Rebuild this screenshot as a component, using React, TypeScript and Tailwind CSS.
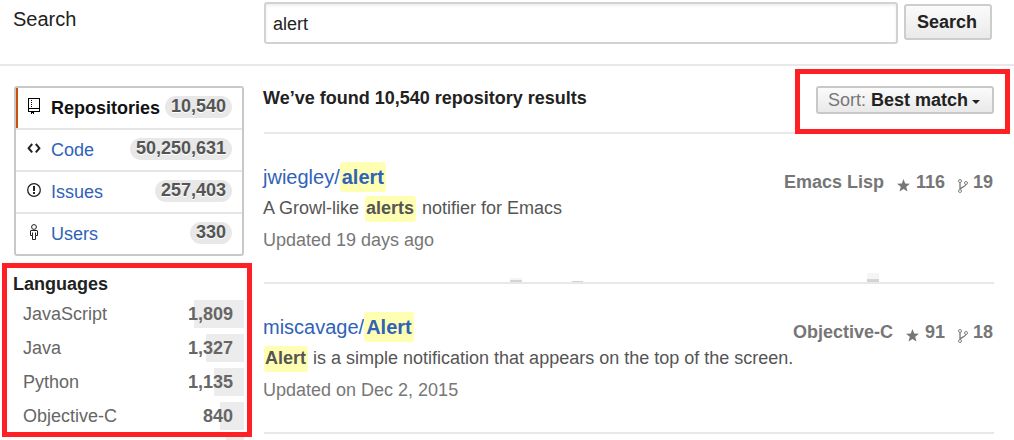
import React from "react";

const GLYPHS = {
  repo: (
    <svg className="h-4 w-3 text-black" viewBox="0 0 12 16" fill="currentColor" shapeRendering="crispEdges">
      <path fillRule="evenodd" d="M0 0h12v14H6v-1h5v-2H1v2h2v1H0zM1 1v9h10V1z" />
      <path d="M3 2h1v1H3zM3 4h1v1H3zM3 6h1v1H3zM3 8h1v1H3zM3 13h3v3H5v-1H4v1H3z" />
    </svg>
  ),
  code: (
    <svg className="h-4 w-3.5" viewBox="0 0 14 16" fill="none" stroke="currentColor" strokeWidth="2">
      <path d="M5.2 4L1.6 8.2l3.6 4.2M8.8 4l3.6 4.2-3.6 4.2" />
    </svg>
  ),
  issue: (
    <svg className="h-4 w-3.5" viewBox="0 0 14 16" fill="currentColor">
      <circle cx="7" cy="8" r="6.3" fill="none" stroke="currentColor" strokeWidth="1.3" />
      <path d="M6 4h2v5H6zM6 10h2v2H6z" />
    </svg>
  ),
  person: (
    <svg className="h-4 w-2" viewBox="0 0 8 16" fill="none" stroke="currentColor" strokeWidth="1">
      <circle cx="4" cy="3" r="2.4" />
      <path d="M1 6.5h6q.5 0 .5.5v4.5h-2v4h-3v-4H.5V7q0-.5.5-.5zM2.5 8.5v3M5.5 8.5v3" />
    </svg>
  ),
};

type Tab = { label: string; count: string; glyph: keyof typeof GLYPHS; active?: boolean };

const TABS: Tab[] = [
  { label: "Repositories", count: "10,540", glyph: "repo", active: true },
  { label: "Code", count: "50,250,631", glyph: "code" },
  { label: "Issues", count: "257,403", glyph: "issue" },
  { label: "Users", count: "330", glyph: "person" },
];

const LANGUAGES = [
  { name: "JavaScript", count: "1,809", bar: 50 },
  { name: "Java", count: "1,327", bar: 38 },
  { name: "Python", count: "1,135", bar: 30 },
  { name: "Objective-C", count: "840", bar: 24 },
];

function Star() {
  return (
    <svg className="mt-[9px] h-[13px] w-[13px]" viewBox="0 0 13 13" fill="currentColor">
      <path d="M6.5 0l1.7 4.5 4.8.3-3.8 3 1.3 4.8-4-2.7-4 2.7 1.3-4.8L0 4.8l4.8-.3z" />
    </svg>
  );
}

function Fork() {
  return (
    <svg className="mt-[9px] h-[14px] w-[10px]" viewBox="0 0 10 14" fill="none" stroke="currentColor">
      <circle cx="2" cy="2" r="1.5" strokeWidth="0.9" />
      <circle cx="8" cy="4" r="1.5" strokeWidth="0.9" />
      <circle cx="2" cy="12" r="1.5" strokeWidth="0.9" />
      <path d="M2 3.5v7M7.8 5.5C7.5 8 3.4 7.6 2.4 10" strokeWidth="1.3" />
    </svg>
  );
}

function Stats({ language, stars, forks }: { language: string; stars: string; forks: string }) {
  return (
    <div className="flex h-6 items-start whitespace-nowrap pr-px font-bold leading-6 text-[#767676]">
      <span>{language}</span>
      <span className="ml-[13px] flex gap-[6px]"><Star />{stars}</span>
      <span className="ml-[13px] flex gap-[5px]"><Fork />{forks}</span>
    </div>
  );
}

export default function App() {
  return (
    <div className="relative h-[440px] w-[1014px] overflow-hidden bg-white font-['Liberation_Sans',Arial,sans-serif] text-[18px] leading-6 text-[#222]">
      <header className="flex h-[66px] border-b-2 border-[#e8e8e8]">
        <h1 className="ml-[13px] w-[251px] pt-[7px] text-[20px] leading-6">Search</h1>
        <div className="mt-[2px] flex h-[42px] w-[634px] items-center rounded-[3px] border-2 border-[#d2d2d2] pl-[7px] pt-[2px] shadow-[inset_0_2px_3px_#00000010]">
          alert
        </div>
        <button className="ml-[6px] mt-1 h-9 w-[88px] rounded-[3px] border-2 border-[#cdcdcd] bg-linear-to-b from-[#fbfbfb] to-[#eaeaea] pr-[2px] font-bold leading-8">
          Search
        </button>
      </header>

      <div className="flex">
        <aside className="ml-[14px] w-[230px] shrink-0 pt-5">
          <nav className="h-[170px] rounded-[3px] border-2 border-[#c9c9c9]">
            {TABS.map((t, i) => (
              <div key={t.label} className={`flex h-[42px] ${i < 3 ? "border-b-2 border-[#e6e6e6]" : ""}`}>
                <span className={t.active ? "h-10 w-[2px] bg-[#c9510c]" : "w-[2px]"} />
                <span className="flex w-[33px] justify-center pr-[1px] pt-[10px]">{GLYPHS[t.glyph]}</span>
                <span className={t.active ? "pt-2 font-bold text-[#111]" : "pt-2 text-[#2f62b8]"}>{t.label}</span>
                <span className="ml-auto mr-[10px] mt-2 h-[22px] rounded-full bg-[#e8e8e8] px-[6px] font-bold leading-[21px] text-[#555] [text-shadow:0_1px_0_#fff]">
                  {t.count}
                </span>
              </div>
            ))}
          </nav>
          <h2 className="-ml-px mt-4 font-bold leading-6">Languages</h2>
          <ul className="mt-[4px] flex flex-col gap-[6px] text-[#666]">
            {LANGUAGES.map((l) => (
              <li key={l.name} className="relative flex h-7 justify-between pl-[9px] pr-[11px] leading-7">
                <span className="absolute inset-y-0 right-0 bg-[#ececec]" style={{ width: l.bar }} />
                <span className="relative">{l.name}</span>
                <b className="relative">{l.count}</b>
              </li>
            ))}
            <li className="ml-auto h-7 w-[18px] bg-[#ececec]" />
          </ul>
        </aside>

        <main className="ml-5 w-[730px] shrink-0">
          <div className="flex h-[68px] justify-between border-b-2 border-[#e8e8e8]">
            <h3 className="-ml-px pt-5 font-bold">We’ve found 10,540 repository results</h3>
            <button className="mt-5 flex h-7 w-[178px] items-center rounded-[3px] border-2 border-[#c8c8c8] bg-linear-to-b from-[#fbfbfb] to-[#e9e9e9] pl-[10px]">
              <span className="text-[#777]">Sort:&nbsp;</span>
              <b>Best match</b>
              <svg className="ml-1 mt-1 h-1 w-2" viewBox="0 0 8 4"><path d="M0 0h8L4 4z" fill="#222" /></svg>
            </button>
          </div>

          <article className="relative flex h-[150px] justify-between border-b-2 border-[#e8e8e8]">
            <div className="-ml-px pt-7">
              <h4 className="flex h-[30px] text-[20px] leading-[30px] text-[#2f62b8]">
                jwiegley/<b className="rounded-[3px] bg-[#ffffb3] px-[2px]">alert</b>
              </h4>
              <p className="mt-1 flex h-[26px] whitespace-pre leading-6 text-[#555]">
                A Growl-like <b className="mx-[1px] rounded-[3px] bg-[#ffffb3] pl-[1px] pr-[2px]">alerts</b> notifier for Emacs
              </p>
              <p className="mt-[6px] text-[#777]">Updated 19 days ago</p>
            </div>
            <div className="pt-9"><Stats language="Emacs Lisp" stars="116" forks="19" /></div>
            <svg className="absolute bottom-0 left-0 h-[10px] w-full" viewBox="0 0 730 10" shapeRendering="crispEdges">
              <path d="M246 6h12v2h-12zM603 1h12v6h-12z" fill="#f5f5f5" />
              <path d="M246 8h12v2h-12zM308 9h11v1h-11zM603 7h12v3h-12z" fill="#d4d4d4" />
            </svg>
          </article>

          <article className="flex h-[150px] justify-between border-b-2 border-[#e8e8e8]">
            <div className="-ml-px -mr-2 pt-7">
              <h4 className="flex h-[30px] text-[20px] leading-[30px] text-[#2f62b8]">
                miscavage/<b className="rounded-[3px] bg-[#ffffb3] px-[2px]">Alert</b>
              </h4>
              <p className="mt-1 flex h-[26px] whitespace-pre leading-6 text-[#555]">
                <b className="ml-[1px] rounded-[3px] bg-[#ffffb3] pl-[1px] pr-[2px]">Alert</b> is a simple notification that appears on the top of the screen.
              </p>
              <p className="mt-[6px] text-[#777]">Updated on Dec 2, 2015</p>
            </div>
            <div className="pt-9"><Stats language="Objective-C" stars="91" forks="18" /></div>
          </article>
        </main>
      </div>

      <div className="pointer-events-none absolute left-[2px] top-[263px] h-[174px] w-[250px] border-5 border-[#ff2026]" />
      <div className="pointer-events-none absolute left-[795px] top-[69px] h-[65px] w-[215px] border-5 border-[#ff2026]" />
    </div>
  );
}
